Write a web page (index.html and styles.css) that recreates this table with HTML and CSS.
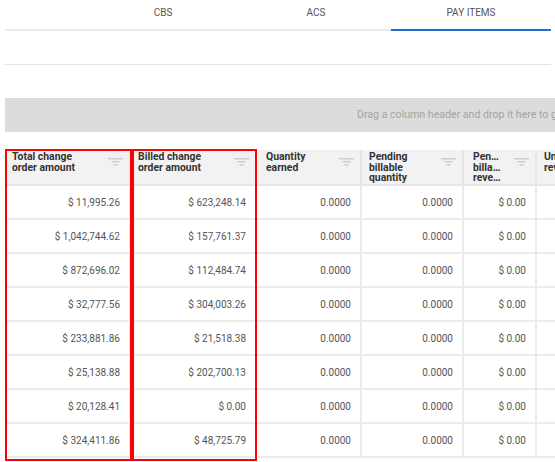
FILE: index.html
```html
<!DOCTYPE html>
<html>
<head>
<meta charset="utf-8">
<link rel="stylesheet" href="styles.css">
</head>
<body>
<div class="page">
  <nav class="tabs">
    <div class="tab tab-cbs">CBS</div>
    <div class="tab tab-acs">ACS</div>
    <div class="tab tab-pay active">PAY ITEMS</div>
  </nav>
  <div class="toolbar"></div>
  <div class="group-panel">Drag a column header and drop it here to group by that column</div>
  <div class="grid-wrap">
    <div class="grid">
      <div class="hcell"><span class="htext">Total change order amount</span><svg class="filter" viewBox="0 0 15 8"><path d="M0 0.75H15M3.5 3.75H11.5M5.5 6.75H9.5"/></svg></div>
      <div class="hcell"><span class="htext">Billed change order amount</span><svg class="filter" viewBox="0 0 15 8"><path d="M0 0.75H15M3.5 3.75H11.5M5.5 6.75H9.5"/></svg></div>
      <div class="hcell hcell-qty"><span class="htext short">Quantity earned</span><svg class="filter" viewBox="0 0 15 8"><path d="M0 0.75H15M3.5 3.75H11.5M5.5 6.75H9.5"/></svg></div>
      <div class="hcell"><span class="htext">Pending billable quantity</span><svg class="filter" viewBox="0 0 15 8"><path d="M0 0.75H15M3.5 3.75H11.5M5.5 6.75H9.5"/></svg></div>
      <div class="hcell hcell-rev"><span class="htext narrow"><span class="cut">Pending</span><span class="cut">billable</span><span class="cut">revenue</span></span><svg class="filter" viewBox="0 0 15 8"><path d="M0 0.75H15M3.5 3.75H11.5M5.5 6.75H9.5"/></svg></div>
      <div class="hcell"><span class="htext">Unbilled revenue</span></div>

      <div class="cell">$ 11,995.26</div><div class="cell">$ 623,248.14</div><div class="cell">0.0000</div><div class="cell">0.0000</div><div class="cell">$ 0.00</div><div class="cell">$ 0.00</div>
      <div class="cell">$ 1,042,744.62</div><div class="cell">$ 157,761.37</div><div class="cell">0.0000</div><div class="cell">0.0000</div><div class="cell">$ 0.00</div><div class="cell">$ 0.00</div>
      <div class="cell">$ 872,696.02</div><div class="cell">$ 112,484.74</div><div class="cell">0.0000</div><div class="cell">0.0000</div><div class="cell">$ 0.00</div><div class="cell">$ 0.00</div>
      <div class="cell">$ 32,777.56</div><div class="cell">$ 304,003.26</div><div class="cell">0.0000</div><div class="cell">0.0000</div><div class="cell">$ 0.00</div><div class="cell">$ 0.00</div>
      <div class="cell">$ 233,881.86</div><div class="cell">$ 21,518.38</div><div class="cell">0.0000</div><div class="cell">0.0000</div><div class="cell">$ 0.00</div><div class="cell">$ 0.00</div>
      <div class="cell">$ 25,138.88</div><div class="cell">$ 202,700.13</div><div class="cell">0.0000</div><div class="cell">0.0000</div><div class="cell">$ 0.00</div><div class="cell">$ 0.00</div>
      <div class="cell">$ 20,128.41</div><div class="cell">$ 0.00</div><div class="cell">0.0000</div><div class="cell">0.0000</div><div class="cell">$ 0.00</div><div class="cell">$ 0.00</div>
      <div class="cell">$ 324,411.86</div><div class="cell">$ 48,725.79</div><div class="cell">0.0000</div><div class="cell">0.0000</div><div class="cell">$ 0.00</div><div class="cell">$ 0.00</div>
    </div>
    <div class="highlight hl-total"></div>
    <div class="highlight hl-billed"></div>
  </div>
</div>
</body>
</html>
```
FILE: styles.css
```css
html, body {
  margin: 0;
  padding: 0;
  background: #ffffff;
  overflow: hidden;
}
body {
  font-family: Roboto, "Liberation Sans", Arial, sans-serif;
  color: #555;
}
.page {
  padding-left: 5px;
  width: 800px;
}
.tabs {
  display: flex;
  box-sizing: border-box;
  width: 546px;
  height: 31px;
  padding-left: 80px;
  border-bottom: 2px solid #ebebeb;
}
.tab {
  box-sizing: border-box;
  height: 31px;
  padding-top: 7px;
  text-align: center;
  font-size: 10px;
  line-height: 12px;
  color: #555;
}
.tab-cbs { width: 156px; }
.tab-acs { width: 150px; }
.tab-pay { width: 160px; }
.tab.active {
  border-bottom: 2px solid #1f6fd0;
}
.toolbar {
  width: 546px;
  height: 33px;
  border-bottom: 1px solid #e3e3e3;
}
.group-panel {
  margin-top: 33px;
  height: 34px;
  width: 800px;
  box-sizing: border-box;
  padding-left: 352px;
  background: #dcdcdc;
  color: #a3a3a3;
  font-size: 10.6px;
  line-height: 34px;
  white-space: nowrap;
  overflow: hidden;
}
.grid-wrap {
  position: relative;
  margin-top: 18px;
}
.grid {
  display: grid;
  grid-template-columns: 126px 126px 105px 102px 73px 200px;
  grid-template-rows: 36px;
  grid-auto-rows: 34px;
  height: 313px;
  overflow: hidden;
}
.hcell {
  box-sizing: border-box;
  display: flex;
  justify-content: space-between;
  align-items: flex-start;
  padding: 2px 6px 0 7px;
  background: #f2f2f2;
  border-right: 2px solid #e6e6e6;
  border-bottom: 2px solid #e6e6e6;
  overflow: hidden;
}
.hcell-qty {
  padding-left: 9px;
}
.hcell-rev {
  padding-left: 9px;
}
.htext {
  font-size: 10.4px;
  line-height: 10.5px;
  font-weight: 700;
  color: #333;
  max-width: 75px;
}
.htext.short {
  max-width: 52px;
}
.htext.narrow {
  width: 30px;
}
.cut {
  display: block;
  white-space: nowrap;
  overflow: hidden;
  text-overflow: ellipsis;
}
.filter {
  flex: none;
  width: 15px;
  height: 8px;
  margin-top: 6px;
  fill: none;
  stroke: #cdcdcd;
  stroke-width: 1.5;
}
.cell {
  box-sizing: border-box;
  display: flex;
  align-items: center;
  justify-content: flex-end;
  padding-right: 9px;
  border-right: 2px solid #ebebeb;
  border-bottom: 2px solid #ebebeb;
  font-size: 10px;
  color: #555;
  white-space: nowrap;
}
.highlight {
  position: absolute;
  top: -1px;
  height: 312px;
  box-sizing: border-box;
  border: 2px solid #ff0000;
}
.hl-total {
  left: 0;
  width: 127px;
}
.hl-billed {
  left: 127px;
  width: 125px;
}
```
